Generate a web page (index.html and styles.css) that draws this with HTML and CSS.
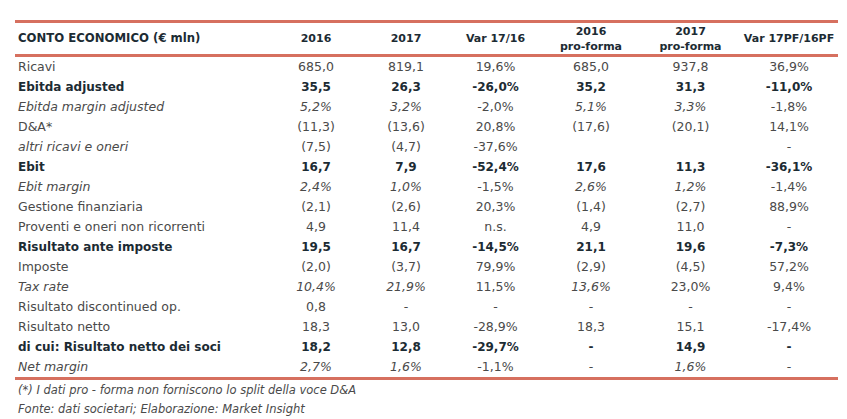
FILE: index.html
```html
<!DOCTYPE html>
<html lang="it">
<head>
<meta charset="utf-8">
<title>Conto economico</title>
<link rel="stylesheet" href="styles.css">
</head>
<body>
<div class="page">
<table class="ce">
<colgroup>
<col class="c-label"><col class="c-a"><col class="c-b"><col class="c-c"><col class="c-d"><col class="c-e"><col class="c-f">
</colgroup>
<thead>
<tr>
<th class="label">CONTO ECONOMICO (€ mln)</th>
<th>2016</th>
<th>2017</th>
<th>Var 17/16</th>
<th>2016<br>pro-forma</th>
<th>2017<br>pro-forma</th>
<th>Var 17PF/16PF</th>
</tr>
</thead>
<tbody>
<tr><td class="label">Ricavi</td><td>685,0</td><td>819,1</td><td>19,6%</td><td>685,0</td><td>937,8</td><td>36,9%</td></tr>
<tr class="b"><td class="label">Ebitda adjusted</td><td>35,5</td><td>26,3</td><td>-26,0%</td><td>35,2</td><td>31,3</td><td>-11,0%</td></tr>
<tr><td class="label i">Ebitda margin adjusted</td><td class="i">5,2%</td><td class="i">3,2%</td><td>-2,0%</td><td class="i">5,1%</td><td class="i">3,3%</td><td>-1,8%</td></tr>
<tr><td class="label">D&amp;A*</td><td>(11,3)</td><td>(13,6)</td><td>20,8%</td><td>(17,6)</td><td>(20,1)</td><td>14,1%</td></tr>
<tr><td class="label i">altri ricavi e oneri</td><td>(7,5)</td><td>(4,7)</td><td>-37,6%</td><td></td><td></td><td>-</td></tr>
<tr class="b"><td class="label">Ebit</td><td>16,7</td><td>7,9</td><td>-52,4%</td><td>17,6</td><td>11,3</td><td>-36,1%</td></tr>
<tr><td class="label i">Ebit margin</td><td class="i">2,4%</td><td class="i">1,0%</td><td>-1,5%</td><td class="i">2,6%</td><td class="i">1,2%</td><td>-1,4%</td></tr>
<tr><td class="label">Gestione finanziaria</td><td>(2,1)</td><td>(2,6)</td><td>20,3%</td><td>(1,4)</td><td>(2,7)</td><td>88,9%</td></tr>
<tr><td class="label">Proventi e oneri non ricorrenti</td><td>4,9</td><td>11,4</td><td>n.s.</td><td>4,9</td><td>11,0</td><td>-</td></tr>
<tr class="b"><td class="label">Risultato ante imposte</td><td>19,5</td><td>16,7</td><td>-14,5%</td><td>21,1</td><td>19,6</td><td>-7,3%</td></tr>
<tr><td class="label">Imposte</td><td>(2,0)</td><td>(3,7)</td><td>79,9%</td><td>(2,9)</td><td>(4,5)</td><td>57,2%</td></tr>
<tr><td class="label i">Tax rate</td><td class="i">10,4%</td><td class="i">21,9%</td><td>11,5%</td><td class="i">13,6%</td><td>23,0%</td><td>9,4%</td></tr>
<tr><td class="label">Risultato discontinued op.</td><td>0,8</td><td>-</td><td>-</td><td>-</td><td>-</td><td>-</td></tr>
<tr><td class="label">Risultato netto</td><td>18,3</td><td>13,0</td><td>-28,9%</td><td>18,3</td><td>15,1</td><td>-17,4%</td></tr>
<tr class="b"><td class="label">di cui: Risultato netto dei soci</td><td>18,2</td><td>12,8</td><td>-29,7%</td><td>-</td><td>14,9</td><td>-</td></tr>
<tr class="last"><td class="label i">Net margin</td><td class="i">2,7%</td><td class="i">1,6%</td><td>-1,1%</td><td>-</td><td class="i">1,6%</td><td>-</td></tr>
</tbody>
</table>
<div class="notes">
<p>(*) I dati pro - forma non forniscono lo split della voce D&amp;A</p>
<p>Fonte: dati societari; Elaborazione: Market Insight</p>
</div>
</div>
</body>
</html>
```

FILE: styles.css
```css
html, body {
  margin: 0;
  padding: 0;
  background: #ffffff;
}

.page {
  padding: 20px 0 0 15px;
  font-family: "DejaVu Sans", "Lato", sans-serif;
  color: #4a4a4a;
}

.ce {
  width: 823px;
  border-collapse: collapse;
  table-layout: fixed;
  font-size: 12.5px;
}

.c-label { width: 255px; }
.c-a { width: 92px; }
.c-b { width: 88px; }
.c-c { width: 91px; }
.c-d { width: 100px; }
.c-e { width: 99px; }
.c-f { width: 98px; }

.ce thead tr {
  border-top: 3px solid #d6705f;
  border-bottom: 3px solid #d6705f;
}

.ce th {
  height: 31px;
  padding: 0;
  font-weight: 700;
  font-size: 11px;
  line-height: 15px;
  color: #1c2b33;
  text-align: center;
  vertical-align: middle;
}

.ce th.label {
  text-align: left;
  padding-left: 3px;
  font-size: 11.7px;
}

.ce td {
  height: 20px;
  padding: 0;
  line-height: 20px;
  text-align: center;
  white-space: nowrap;
}

.ce td.label {
  text-align: left;
  padding-left: 3px;
}

.ce tr.b td {
  font-weight: 700;
  font-size: 12px;
  color: #1c2b33;
}

.ce .i {
  font-style: italic;
}

.ce tr.last {
  border-bottom: 3px solid #d6705f;
}

.notes {
  padding: 1px 0 0 3px;
  font-style: italic;
  font-size: 11.5px;
  color: #4a4a4a;
}

.notes p {
  margin: 0;
  line-height: 19px;
}
```
